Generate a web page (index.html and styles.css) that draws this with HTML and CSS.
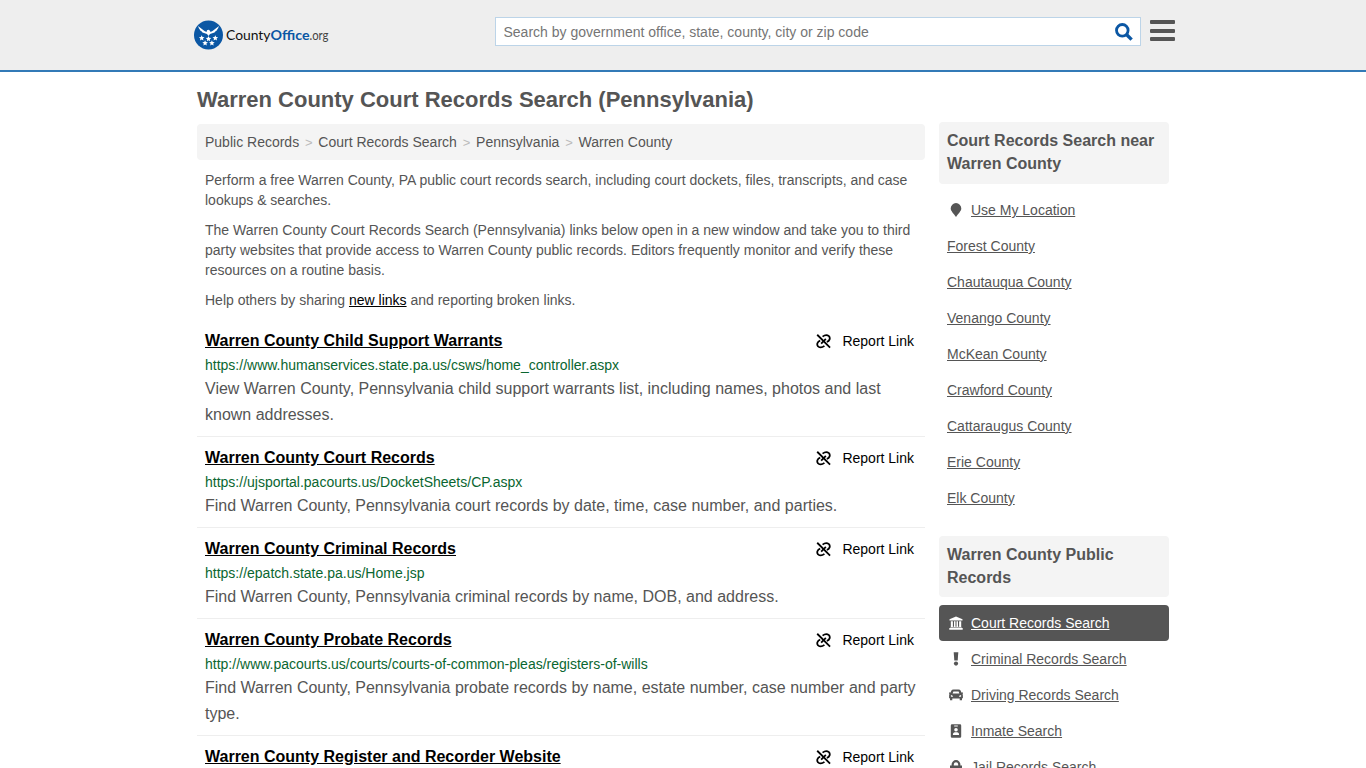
FILE: index.html
```html
<!DOCTYPE html>
<html lang="en">
<head>
    <meta charset="utf-8">
    <title>Warren County Court Records Search (Pennsylvania)</title>
    <link rel="stylesheet" href="styles.css">
</head>

<body>
<svg class="defs" width="0" height="0">
  <symbol id="unlink" viewBox="0 0 16 16">
    <g fill="none" stroke="#000" stroke-width="1.900">
      <path d="M1.300 .8L15 14.500"/>
      <path d="M7 2.800C9 1.200 12 .8 13.800 2.300C15.500 4.200 14.700 7.500 11.500 8.500"/>
      <path d="M9 12.700C7 14.300 4 14.700 2.200 13.200C.5 11.300 1.300 8 4.500 7"/>
      <path d="M5.500 10.300L10.500 5.300"/>
    </g>
  </symbol>
</svg>

<header class="header">
  <div class="header-inner">
    <a class="logo">
      <svg width="140" height="30" viewBox="0 0 140 30">
        <circle cx="14.500" cy="15" r="14.500" fill="#0b57a4"/>
        <path fill="#fff" d="M4 6L10.500 11L12.500 12L13 10.300L14.700 9.800L16 10.700L16.500 12L18.500 11L25 6L24 8.500L23.500 9L22.800 10.500L21.800 11L20.500 12.500L17.500 13.500L16 14L14.500 16L13 14L11.500 13.500L8.500 12.500L7.200 11L6.200 10.500L5.500 9L5 8.500z"/>
        <g fill="#fff">
          <path id="star" d="M7.700 15.300l.8 1.800 2 .2-1.500 1.300.4 2-1.700-1-1.700 1 .4-2-1.500-1.300 2-.2z"/>
          <use href="#star" x="6.800" y=".7"/>
          <use href="#star" x="13.600"/>
          <use href="#star" x="3.400" y="5"/>
          <use href="#star" x="10.200" y="5"/>
        </g>
        <text class="logo-text" x="32" y="20" textLength="44.500" lengthAdjust="spacingAndGlyphs">County</text>
        <text class="logo-text logo-bold" x="76.500" y="20" textLength="39" lengthAdjust="spacingAndGlyphs">Office</text>
        <text class="logo-text logo-light" x="115.500" y="20" textLength="19" lengthAdjust="spacingAndGlyphs">.org</text>
      </svg>
    </a>
    <form class="search">
      <input type="text" placeholder="Search by government office, state, county, city or zip code">
      <svg class="search-icon" width="18" height="18" viewBox="0 0 18 18">
        <circle cx="7.300" cy="7.300" r="5.800" fill="none" stroke="#0b57a4" stroke-width="2.800"/>
        <path d="M11.500 11.500L16.600 16.600" stroke="#0b57a4" stroke-width="3.400"/>
      </svg>
    </form>
    <div class="menu"><span></span><span></span><span></span></div>
  </div>
</header>

<div class="page">
  <div class="main">
    <h1>Warren County Court Records Search (Pennsylvania)</h1>
    <div class="breadcrumb">
      <a>Public Records</a><i>&gt;</i><a>Court Records Search</a><i>&gt;</i><a>Pennsylvania</a><i>&gt;</i><a>Warren County</a>
    </div>
    <div class="intro">
      <p>Perform a free Warren County, PA public court records search, including court dockets, files, transcripts, and case lookups &amp; searches.</p>
      <p>The Warren County Court Records Search (Pennsylvania) links below open in a new window and take you to third party websites that provide access to Warren County public records. Editors frequently monitor and verify these resources on a routine basis.</p>
      <p>Help others by sharing <a href="#">new links</a> and reporting broken links.</p>
    </div>

    <div class="item">
      <div class="item-head">
        <a class="title" href="#">Warren County Child Support Warrants</a>
        <span class="report"><svg width="15" height="15"><use href="#unlink"/></svg>Report Link</span>
      </div>
      <div class="url">https://www.humanservices.state.pa.us/csws/home_controller.aspx</div>
      <div class="desc">View Warren County, Pennsylvania child support warrants list, including names, photos and last known addresses.</div>
    </div>
    <div class="item">
      <div class="item-head">
        <a class="title" href="#">Warren County Court Records</a>
        <span class="report"><svg width="15" height="15"><use href="#unlink"/></svg>Report Link</span>
      </div>
      <div class="url">https://ujsportal.pacourts.us/DocketSheets/CP.aspx</div>
      <div class="desc">Find Warren County, Pennsylvania court records by date, time, case number, and parties.</div>
    </div>
    <div class="item">
      <div class="item-head">
        <a class="title" href="#">Warren County Criminal Records</a>
        <span class="report"><svg width="15" height="15"><use href="#unlink"/></svg>Report Link</span>
      </div>
      <div class="url">https://epatch.state.pa.us/Home.jsp</div>
      <div class="desc">Find Warren County, Pennsylvania criminal records by name, DOB, and address.</div>
    </div>
    <div class="item">
      <div class="item-head">
        <a class="title" href="#">Warren County Probate Records</a>
        <span class="report"><svg width="15" height="15"><use href="#unlink"/></svg>Report Link</span>
      </div>
      <div class="url">http://www.pacourts.us/courts/courts-of-common-pleas/registers-of-wills</div>
      <div class="desc">Find Warren County, Pennsylvania probate records by name, estate number, case number and party type.</div>
    </div>
    <div class="item">
      <div class="item-head">
        <a class="title" href="#">Warren County Register and Recorder Website</a>
        <span class="report"><svg width="15" height="15"><use href="#unlink"/></svg>Report Link</span>
      </div>
    </div>
  </div>

  <div class="sidebar">
    <h2>Court Records Search near Warren County</h2>
    <ul>
      <li>
        <svg class="icon" viewBox="0 0 18 16"><path d="M9 1.100a5.300 5.300 0 0 1 5.300 5.300c0 2.500-3 5-5.300 8.500C6.700 11.400 3.700 8.900 3.700 6.400A5.300 5.300 0 0 1 9 1.100z"/></svg>
        <a href="#">Use My Location</a>
      </li>
      <li><a href="#">Forest County</a></li>
      <li><a href="#">Chautauqua County</a></li>
      <li><a href="#">Venango County</a></li>
      <li><a href="#">McKean County</a></li>
      <li><a href="#">Crawford County</a></li>
      <li><a href="#">Cattaraugus County</a></li>
      <li><a href="#">Erie County</a></li>
      <li><a href="#">Elk County</a></li>
    </ul>
    <h2 class="short">Warren County Public Records</h2>
    <ul>
      <li class="active">
        <svg class="icon" viewBox="0 0 18 16"><path d="M9 1.500L15.500 4.200V5.500H2.500V4.200zM3.800 6.300H5.900V11.700H7V6.300H8.500V11.700H9.500V6.300H11V11.700H12.100V6.300H14.200V11.700L15 12.500H3L3.800 11.700zM2.300 13H15.700V14.700H2.300z"/></svg>
        <a href="#">Court Records Search</a>
      </li>
      <li>
        <svg class="icon" viewBox="0 0 18 16"><path d="M6.700 1.300H11.300L10.700 9.600H7.300z"/><circle cx="9" cy="12.600" r="2.100"/></svg>
        <a href="#">Criminal Records Search</a>
      </li>
      <li>
        <svg class="icon" viewBox="0 0 18 16"><path fill-rule="evenodd" d="M6.500 2.500H11.500Q13.200 2.500 13.700 3.800L14.400 5.500H16V6.800H15.300Q15.900 7.500 15.900 8.500V11.300H15V13.300H12.700V11.500H5.300V13.300H3V11.300H2.100V8.500Q2.100 7.500 2.700 6.800H2V5.500H3.600L4.300 3.800Q4.800 2.500 6.500 2.500zM6.400 4.400L5.600 6.400H12.400L11.600 4.400zM3.900 8V9.700H6.200Q5.700 8.200 3.900 8zM14.100 8V9.700H11.800Q12.300 8.200 14.100 8z"/></svg>
        <a href="#">Driving Records Search</a>
      </li>
      <li>
        <svg class="icon" viewBox="0 0 18 16"><path fill-rule="evenodd" d="M5 1.200H13Q14.200 1.200 14.200 2.400V13.600Q14.200 14.800 13 14.800H5Q3.800 14.800 3.800 13.600V2.400Q3.800 1.200 5 1.200zM7.200 2.600V3.500H10.800V2.600zM9 5A1.800 1.800 0 0 0 9 8.600A1.800 1.800 0 0 0 9 5zM5.900 12H12.100Q12.100 9.300 10 9.300H8Q5.900 9.300 5.900 12z"/></svg>
        <a href="#">Inmate Search</a>
      </li>
      <li>
        <svg class="icon" viewBox="0 0 18 16"><path fill-rule="evenodd" d="M4.600 6.500V5.500A4.400 4.400 0 0 1 13.400 5.500V6.500H15V14.500H3V6.500zM6.800 6.500H11.200V5.500A2.200 2.200 0 0 0 6.800 5.500z"/></svg>
        <a href="#">Jail Records Search</a>
      </li>
    </ul>
  </div>
</div>
</body>
</html>
```
FILE: styles.css
```css
* {
  box-sizing: border-box;
}

body {
  margin: 0;
  height: 768px;
  overflow: hidden;
  font-family: Arial, "Liberation Sans", sans-serif;
  font-size: 14px;
  line-height: 20px;
  color: #555;
  background: #fff;
}

.defs {
  position: absolute;
}

.header {
  height: 72px;
  background: #eee;
  border-bottom: 2px solid #337ab7;
}

.header-inner {
  width: 982px;
  margin-left: 194px;
  display: flex;
  align-items: flex-start;
}

.logo {
  width: 301px;
  padding-top: 20px;
}

.logo svg {
  display: block;
}

.logo-text {
  font-family: Lato, sans-serif;
  font-size: 14px;
  fill: #111;
}

.logo-bold {
  font-weight: bold;
  fill: #0b57a4;
}

.logo-light {
  fill: #444;
}

.search {
  width: 646px;
  height: 29px;
  margin: 17px 9px 0 0;
  padding-right: 7px;
  display: flex;
  align-items: center;
  background: #fff;
  border: 1px solid #bcd4e8;
}

.search input {
  flex: 1;
  border: 0;
  padding: 0 8px 0 7.5px;
  font: 14px Arial, "Liberation Sans", sans-serif;
}

.search input::placeholder {
  color: #757575;
}

.menu {
  padding-top: 20px;
}

.menu span {
  display: block;
  width: 25px;
  height: 4px;
  margin-bottom: 4.5px;
  background: #555;
  border-radius: 1px;
}

.page {
  width: 972px;
  margin-left: 197px;
  display: flex;
  gap: 14px;
}

.main {
  width: 728px;
}

h1 {
  margin: 14px 0 10px;
  font-size: 22px;
  line-height: 28px;
}

.breadcrumb {
  height: 36px;
  padding: 8px;
  background: #f4f4f4;
  border-radius: 4px;
}

.breadcrumb i {
  margin: 0 5.800px;
  font-style: normal;
  font-size: 13px;
  color: #bbb;
}

.intro {
  padding: 10px 8px 0;
}

.intro p {
  margin: 0 0 10px;
}

.intro a {
  color: #000;
}

.item {
  padding: 9px 8px 8px;
  border-bottom: 1px solid #eee;
}

.item-head {
  display: flex;
  justify-content: space-between;
  height: 26px;
  padding-right: 3px;
  line-height: 24px;
}

.title {
  font-size: 16px;
  font-weight: bold;
  color: #000;
}

.report {
  display: flex;
  align-items: center;
  height: 24px;
  color: #000;
}

.report svg {
  margin-right: 11px;
}

.url {
  margin-bottom: 1px;
  color: #0a6630;
}

.desc {
  font-size: 16px;
  line-height: 26px;
}

.sidebar {
  width: 230px;
  padding-top: 50px;
}

h2 {
  height: 62px;
  margin: 0 0 8px;
  padding: 7px 8px;
  font-size: 16px;
  line-height: 23px;
  background: #f4f4f4;
  border-radius: 4px;
}

.short {
  height: 61px;
}

ul {
  margin: 0 0 20px;
  padding: 0;
  list-style: none;
}

li {
  display: flex;
  align-items: center;
  height: 36px;
  padding: 0 8px;
}

li a {
  color: #555;
}

.icon {
  width: 18px;
  height: 16px;
  margin-right: 6px;
  fill: #555;
}

.active {
  background: #555;
  border-radius: 4px;
}

.active a {
  color: #fff;
}

.active .icon {
  fill: #fff;
}
```
